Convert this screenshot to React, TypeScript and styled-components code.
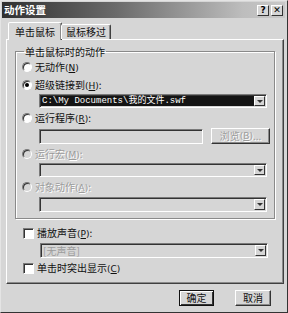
import React from "react"
import styled, { createGlobalStyle } from "styled-components"

const GlobalStyle = createGlobalStyle`
    html, body {
        margin: 0;
        padding: 0;
        background: #d6d6d6;
    }
    body {
        font-family: "Noto Sans CJK SC", "DejaVu Sans", sans-serif;
    }
`

const Window = styled.div`
    width: 288px;
    height: 313px;
    box-sizing: border-box;
    background: #d6d6d6;
    border: 1px solid;
    border-color: #e4e4e4 #333 #333 #e4e4e4;
    padding: 1px 2px 0 1px;
    display: flex;
    flex-direction: column;
    font-size: 10px;
    line-height: 1;
    color: #111;
    overflow: hidden;
`

const TitleBar = styled.div`
    height: 16px;
    display: flex;
    align-items: center;
    padding: 0 2px 0 2px;
    background: linear-gradient(90deg, #303030 0%, #6a6a6a 40%, #bdbdbd 85%, #c8c8c8 100%);
`

const Title = styled.span`
    flex: 1;
    color: #fff;
    font-size: 10.5px;
    font-weight: 700;
`

const CaptionButton = styled.div`
    width: 12px;
    height: 11px;
    margin-left: 2px;
    box-sizing: border-box;
    background: #d6d6d6;
    border: 1px solid;
    border-color: #fff #333 #333 #fff;
    display: flex;
    align-items: center;
    justify-content: center;
    font-family: "DejaVu Sans", sans-serif;
    font-size: 9px;
    font-weight: 700;
    color: #000;
`

const Body = styled.div`
    flex: 1;
    display: flex;
    flex-direction: column;
    padding: 3px 0 0 4px;
`

const TabRow = styled.div`
    display: flex;
    align-items: flex-end;
    height: 18px;
    padding-left: 2px;
    position: relative;
    z-index: 1;
`

const Tab = styled.div<{ $active?: boolean }>`
    height: ${(p) => (p.$active ? 18 : 15)}px;
    box-sizing: border-box;
    padding: 0 ${(p) => (p.$active ? 6 : 4)}px;
    margin-left: ${(p) => (p.$active ? 0 : -1)}px;
    display: flex;
    align-items: center;
    background: #d6d6d6;
    border: 1px solid;
    border-bottom: none;
    border-color: #fff #404040 transparent #fff;
    border-radius: 2px 2px 0 0;
    box-shadow: inset -1px 0 0 #8a8a8a;
    margin-bottom: ${(p) => (p.$active ? -1 : 0)}px;
    font-size: 10px;
`

const Panel = styled.div`
    width: 278px;
    height: 245px;
    box-sizing: border-box;
    border: 1px solid;
    border-color: #fff #404040 #404040 #fff;
    box-shadow: inset -1px -1px 0 #8a8a8a;
    padding: 5px 8px 0 8px;
    display: flex;
    flex-direction: column;
`

const Group = styled.fieldset`
    margin: 0;
    padding: 1px 7px 6px 6px;
    border: 1px solid #8a8a8a;
    box-shadow: inset 1px 1px 0 #fff, 1px 1px 0 #fff;
    display: flex;
    flex-direction: column;
`

const Legend = styled.legend`
    padding: 0 1px;
    margin-left: 2px;
    font-size: 10px;
    line-height: 13px;
`

const OptionRow = styled.div<{ $disabled?: boolean; $top?: number }>`
    height: 16px;
    margin-top: ${(p) => p.$top ?? 0}px;
    display: flex;
    align-items: center;
    gap: 3px;
    color: ${(p) => (p.$disabled ? "#9c9c9c" : "#111")};
    text-shadow: ${(p) => (p.$disabled ? "1px 1px 0 #fff" : "none")};
`

const Radio = styled.span<{ $checked?: boolean; $disabled?: boolean }>`
    width: 10px;
    height: 10px;
    box-sizing: border-box;
    border-radius: 50%;
    border: 1px solid;
    border-color: #7a7a7a #fff #fff #7a7a7a;
    background: ${(p) => (p.$disabled ? "#d6d6d6" : "#fff")};
    box-shadow: inset 1px 1px 0 #333;
    display: flex;
    align-items: center;
    justify-content: center;
    &::after {
        content: "";
        width: 4px;
        height: 4px;
        border-radius: 50%;
        background: ${(p) => (p.$checked ? "#000" : "transparent")};
    }
`

const Check = styled.span`
    width: 11px;
    height: 11px;
    box-sizing: border-box;
    border: 1px solid;
    border-color: #7a7a7a #fff #fff #7a7a7a;
    background: #fff;
    box-shadow: inset 1px 1px 0 #333;
`

const Key = styled.span`
    text-decoration: underline;
`

const Mnemonic = styled.span`
    font-family: "DejaVu Sans", sans-serif;
    font-size: 9px;
`

const Indent = styled.div<{ $top: number }>`
    margin-left: 17px;
    margin-top: ${(p) => p.$top}px;
    display: flex;
    align-items: center;
    gap: 8px;
`

const Field = styled.div<{ $height?: number }>`
    flex: 1;
    height: ${(p) => p.$height ?? 14}px;
    box-sizing: border-box;
    border: 1px solid;
    border-color: #7a7a7a #fff #fff #7a7a7a;
    box-shadow: inset 1px 1px 0 #333;
    background: #d6d6d6;
    display: flex;
    align-items: stretch;
    padding: 1px 1px 0 1px;
`

const FieldText = styled.div<{ $selected?: boolean; $disabled?: boolean }>`
    flex: 1;
    display: flex;
    align-items: center;
    padding-left: 1px;
    margin-bottom: 1px;
    background: ${(p) => (p.$selected ? "#141414" : "transparent")};
    color: ${(p) => (p.$selected ? "#fff" : p.$disabled ? "#9c9c9c" : "#111")};
    font-family: "Liberation Mono", "Noto Sans CJK SC", monospace;
    font-size: 9px;
    white-space: nowrap;
`

const SoundText = styled.span`
    font-family: "Noto Sans CJK SC", sans-serif;
    font-size: 10px;
    line-height: 11px;
`

const ArrowButton = styled.div`
    width: 11px;
    box-sizing: border-box;
    margin-bottom: 1px;
    background: #d6d6d6;
    border: 1px solid;
    border-color: #fff #333 #333 #fff;
    display: flex;
    align-items: center;
    justify-content: center;
    &::after {
        content: "";
        border-left: 3px solid transparent;
        border-right: 3px solid transparent;
        border-top: 3px solid #333;
    }
`

const Button = styled.div<{ $default?: boolean; $disabled?: boolean; $width: number }>`
    width: ${(p) => p.$width}px;
    height: 16px;
    box-sizing: border-box;
    background: #d6d6d6;
    border: 1px solid;
    border-color: ${(p) => (p.$default ? "#111" : "#fff #333 #333 #fff")};
    box-shadow: ${(p) =>
        p.$default ? "inset 1px 1px 0 #fff, inset -1px -1px 0 #333" : "inset -1px -1px 0 #8a8a8a"};
    display: flex;
    align-items: center;
    justify-content: center;
    color: ${(p) => (p.$disabled ? "#9c9c9c" : "#111")};
    text-shadow: ${(p) => (p.$disabled ? "1px 1px 0 #fff" : "none")};
    font-size: 10px;
`

const Section = styled.div<{ $top: number }>`
    margin-top: ${(p) => p.$top}px;
    padding-left: 8px;
    padding-right: 7px;
    display: flex;
    flex-direction: column;
`

const Footer = styled.div`
    display: flex;
    justify-content: flex-end;
    gap: 21px;
    margin-top: 6px;
    padding-right: 14px;
`

const Combo = ({
    text,
    selected,
    disabled,
    sound,
    height,
}: {
    text?: string
    selected?: boolean
    disabled?: boolean
    sound?: boolean
    height?: number
}) => (
    <Field $height={height}>
        <FieldText $selected={selected} $disabled={disabled}>
            {sound ? <SoundText>{text}</SoundText> : text}
        </FieldText>
        <ArrowButton />
    </Field>
)

const Label = ({ text, k, colon = true }: { text: string; k: string; colon?: boolean }) => (
    <span>
        {text}
        <Mnemonic>
            (<Key>{k}</Key>)
        </Mnemonic>
        {colon ? ":" : ""}
    </span>
)

const App = () => {
    return (
        <>
            <GlobalStyle />
            <Window>
                <TitleBar>
                    <Title>动作设置</Title>
                    <CaptionButton>?</CaptionButton>
                    <CaptionButton>✕</CaptionButton>
                </TitleBar>
                <Body>
                    <TabRow>
                        <Tab $active>单击鼠标</Tab>
                        <Tab>鼠标移过</Tab>
                    </TabRow>
                    <Panel>
                        <Group>
                            <Legend>单击鼠标时的动作</Legend>
                            <OptionRow>
                                <Radio />
                                <Label text="无动作" k="N" colon={false} />
                            </OptionRow>
                            <OptionRow $top={2}>
                                <Radio $checked />
                                <Label text="超级链接到" k="H" />
                            </OptionRow>
                            <Indent $top={1}>
                                <Combo text="C:\My Documents\我的文件.swf" selected />
                            </Indent>
                            <OptionRow $top={2}>
                                <Radio />
                                <Label text="运行程序" k="R" />
                            </OptionRow>
                            <Indent $top={2}>
                                <Field $height={15} />
                                <Button $width={59} $disabled style={{ marginRight: -3 }}>
                                    浏览<Mnemonic>(<Key>B</Key>)</Mnemonic>...
                                </Button>
                            </Indent>
                            <OptionRow $disabled $top={2}>
                                <Radio $disabled />
                                <Label text="运行宏" k="M" />
                            </OptionRow>
                            <Indent $top={1}>
                                <Combo disabled />
                            </Indent>
                            <OptionRow $disabled $top={2}>
                                <Radio $disabled />
                                <Label text="对象动作" k="A" />
                            </OptionRow>
                            <Indent $top={2}>
                                <Combo disabled height={15} />
                            </Indent>
                        </Group>
                        <Section $top={6}>
                            <OptionRow>
                                <Check />
                                <Label text="播放声音" k="P" />
                            </OptionRow>
                            <Indent $top={2}>
                                <Combo text="[无声音]" disabled sound height={15} />
                            </Indent>
                            <OptionRow $top={2}>
                                <Check />
                                <Label text="单击时突出显示" k="C" colon={false} />
                            </OptionRow>
                        </Section>
                    </Panel>
                    <Footer>
                        <Button $width={35} $default>
                            确定
                        </Button>
                        <Button $width={36}>取消</Button>
                    </Footer>
                </Body>
            </Window>
        </>
    )
}

export default App
